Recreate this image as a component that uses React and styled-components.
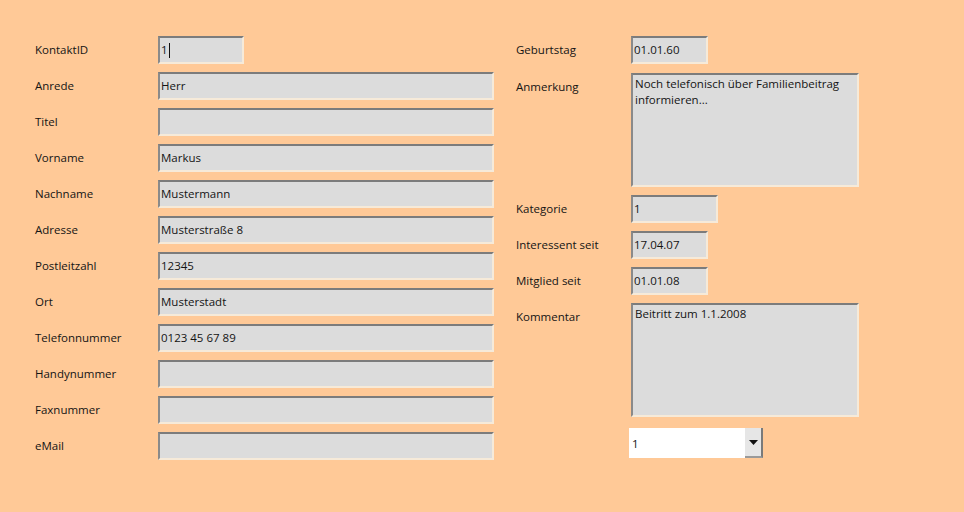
import React from "react";
import styled, { createGlobalStyle } from "styled-components";

const Global = createGlobalStyle`
  html, body { margin: 0; padding: 0; background: #ffc997; }
  body { font-family: "Open Sans", "Noto Sans", sans-serif; font-size: 11.5px; color: #141414; }
`;

const Page = styled.div`
  width: 964px;
  height: 512px;
  box-sizing: border-box;
  padding: 36px 0 0 35px;
  display: flex;
  gap: 22px;
  background: #ffc997;
`;

const Column = styled.div`
  display: flex;
  flex-direction: column;
  gap: ${(p) => p.$gap || 8}px;
`;

const Row = styled.div`
  display: grid;
  grid-template-columns: ${(p) => p.$label}px auto;
  align-items: start;
  margin-top: ${(p) => p.$mt || 0}px;
`;

const Label = styled.div`
  padding-top: 6px;
  line-height: 16px;
  white-space: nowrap;
`;

const Field = styled.div`
  box-sizing: border-box;
  width: ${(p) => p.$w}px;
  height: ${(p) => p.$h || 28}px;
  background: #dcdcdc;
  border-top: 2px solid #7c7c7c;
  border-left: 2px solid #8a8a8a;
  border-right: 2px solid #f6ead9;
  border-bottom: 2px solid #f6ead9;
  padding: ${(p) => (p.$multi ? "1px 2px" : "0 1px")};
  display: flex;
  align-items: ${(p) => (p.$multi ? "flex-start" : "center")};
  line-height: 16px;
  white-space: ${(p) => (p.$multi ? "normal" : "nowrap")};
  overflow: hidden;
`;

const Caret = styled.span`
  display: inline-block;
  width: 1px;
  height: 15px;
  background: #111;
  margin-left: 1px;
  vertical-align: middle;
`;

const Select = styled.div`
  box-sizing: border-box;
  width: 134px;
  height: 30px;
  margin-left: -2px;
  background: #ffffff;
  display: flex;
  align-items: stretch;
`;

const SelectValue = styled.div`
  flex: 1;
  display: flex;
  align-items: center;
  padding-left: 3px;
`;

const SelectButton = styled.div`
  width: 16px;
  background: #e6e6e6;
  border-right: 2px solid #7a7a7a;
  border-bottom: 2px solid #9a9a9a;
  display: flex;
  align-items: center;
  justify-content: center;
`;

const leftRows = [
  ["KontaktID", "1", 86, true],
  ["Anrede", "Herr", 336],
  ["Titel", "", 336],
  ["Vorname", "Markus", 336],
  ["Nachname", "Mustermann", 336],
  ["Adresse", "Musterstraße 8", 336],
  ["Postleitzahl", "12345", 336],
  ["Ort", "Musterstadt", 336],
  ["Telefonnummer", "0123 45 67 89", 336],
  ["Handynummer", "", 336],
  ["Faxnummer", "", 336],
  ["eMail", "", 336],
];

export default function App() {
  return (
    <Page>
      <Global />
      <Column $gap={8}>
        {leftRows.map(([label, value, w, caret]) => (
          <Row key={label} $label={123}>
            <Label>{label}</Label>
            <Field $w={w}>
              {value}
              {caret && <Caret />}
            </Field>
          </Row>
        ))}
      </Column>
      <Column $gap={8}>
        <Row $label={115}>
          <Label>Geburtstag</Label>
          <Field $w={77}>01.01.60</Field>
        </Row>
        <Row $label={115} $mt={1}>
          <Label>Anmerkung</Label>
          <Field $w={228} $h={114} $multi>
            Noch telefonisch über Familienbeitrag informieren...
          </Field>
        </Row>
        <Row $label={115}>
          <Label>Kategorie</Label>
          <Field $w={87}>1</Field>
        </Row>
        <Row $label={115}>
          <Label>Interessent seit</Label>
          <Field $w={77}>17.04.07</Field>
        </Row>
        <Row $label={115}>
          <Label>Mitglied seit</Label>
          <Field $w={77}>01.01.08</Field>
        </Row>
        <Row $label={115}>
          <Label>Kommentar</Label>
          <Field $w={228} $h={114} $multi>
            Beitritt zum 1.1.2008
          </Field>
        </Row>
        <Row $label={115} $mt={3}>
          <Label />
          <Select>
            <SelectValue>1</SelectValue>
            <SelectButton>
              <svg width="9" height="5" viewBox="0 0 9 5">
                <path d="M0 0 L9 0 L4.5 5 Z" fill="#111" />
              </svg>
            </SelectButton>
          </Select>
        </Row>
      </Column>
    </Page>
  );
}
